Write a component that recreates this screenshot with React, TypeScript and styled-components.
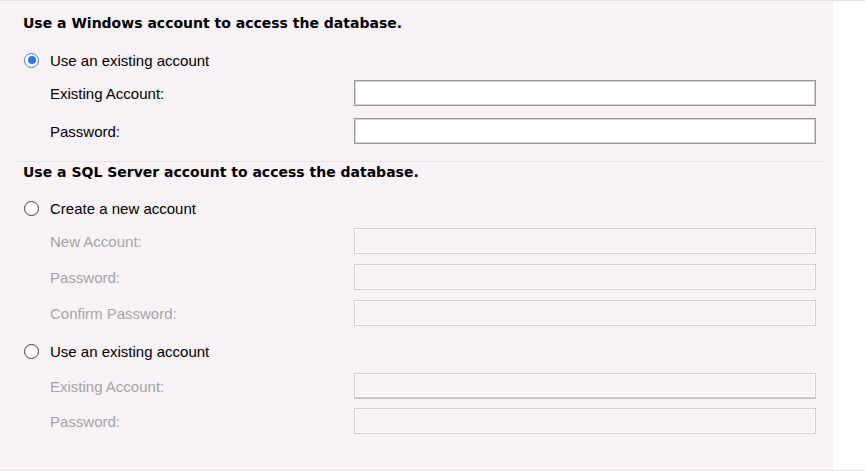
import React from "react";
import styled, { createGlobalStyle } from "styled-components";

const Global = createGlobalStyle`
  html, body { margin: 0; padding: 0; background: #ffffff; }
  body { font-family: "Liberation Sans", Arial, sans-serif; }
`;

const Page = styled.div`
  width: 865px;
  height: 471px;
  box-sizing: border-box;
  border-top: 1px solid #e2e2e4;
  border-bottom: 1px solid #e2e2e4;
  display: flex;
  background: #ffffff;
`;

const Panel = styled.div`
  width: 833px;
  height: 100%;
  background: #f7f2f6;
  display: flex;
  flex-direction: column;
  padding: 13px 0 0 0;
  box-sizing: border-box;
`;

const Heading = styled.div`
  font-family: "DejaVu Sans", Verdana, sans-serif;
  font-weight: bold;
  font-size: 14px;
  line-height: 18px;
  height: 18px;
  color: #000;
  padding-left: 23px;
  white-space: nowrap;
`;

const Separator = styled.div<{ $top: number }>`
  height: 1px;
  margin: ${(p) => p.$top}px 9px 1px 17px;
  background: #e7e3e7;
`;

const RadioRow = styled.label<{ $top: number }>`
  display: flex;
  align-items: center;
  height: 18px;
  margin-top: ${(p) => p.$top}px;
  padding-left: 24px;
  font-size: 15px;
  color: #000;
  gap: 11px;
`;

const RadioDot = styled.span<{ $checked?: boolean }>`
  width: 15px;
  height: 15px;
  box-sizing: border-box;
  border-radius: 50%;
  border: 1.5px solid ${(p) => (p.$checked ? "#3b7fd8" : "#3a3a3a")};
  background: #ffffff;
  display: flex;
  align-items: center;
  justify-content: center;
  &::after {
    content: "";
    display: ${(p) => (p.$checked ? "block" : "none")};
    width: 8px;
    height: 8px;
    border-radius: 50%;
    background: #2f7ae0;
  }
`;

const FieldRow = styled.div<{ $top: number }>`
  display: flex;
  align-items: center;
  height: 26px;
  margin-top: ${(p) => p.$top}px;
  padding-left: 50px;
`;

const FieldLabel = styled.span<{ $disabled?: boolean }>`
  width: 304px;
  font-size: 15px;
  color: ${(p) => (p.$disabled ? "#a3a3a3" : "#000")};
  white-space: nowrap;
`;

const Input = styled.div<{ $disabled?: boolean; $hover?: boolean }>`
  width: 462px;
  height: 26px;
  box-sizing: border-box;
  border: 1px solid ${(p) => (p.$disabled ? "#cfcdcf" : "#999999")};
  ${(p) => (p.$hover ? "border-bottom: 2px solid #c4c4c4;" : "")}
  background: ${(p) => (p.$disabled ? "#f7f2f6" : "#ffffff")};
  box-shadow: ${(p) =>
    p.$disabled ? "inset 0 0 0 1px #ffffff" : "inset 0 0 0 1px #d4d4d4"};
`;

type Field = { label: string; hover?: boolean };

const Fields = ({
  fields,
  disabled,
  first,
  gap,
}: {
  fields: Field[];
  disabled?: boolean;
  first: number;
  gap: number;
}) => (
  <>
    {fields.map((f, i) => (
      <FieldRow key={f.label + i} $top={i === 0 ? first : gap}>
        <FieldLabel $disabled={disabled}>{f.label}</FieldLabel>
        <Input $disabled={disabled} $hover={f.hover} />
      </FieldRow>
    ))}
  </>
);

export default function App() {
  return (
    <>
      <Global />
      <Page>
        <Panel>
          <Heading>Use a Windows account to access the database.</Heading>
          <RadioRow $top={19}>
            <RadioDot $checked />
            Use an existing account
          </RadioRow>
          <Fields first={11} gap={12} fields={[{ label: "Existing Account:" }, { label: "Password:" }]} />
          <Separator $top={17} />
          <Heading>Use a SQL Server account to access the database.</Heading>
          <RadioRow $top={18}>
            <RadioDot />
            Create a new account
          </RadioRow>
          <Fields
            disabled
            first={11}
            gap={10}
            fields={[{ label: "New Account:" }, { label: "Password:" }, { label: "Confirm Password:" }]}
          />
          <RadioRow $top={16}>
            <RadioDot />
            Use an existing account
          </RadioRow>
          <Fields
            disabled
            first={13}
            gap={9}
            fields={[{ label: "Existing Account:", hover: true }, { label: "Password:" }]}
          />
        </Panel>
      </Page>
    </>
  );
}
